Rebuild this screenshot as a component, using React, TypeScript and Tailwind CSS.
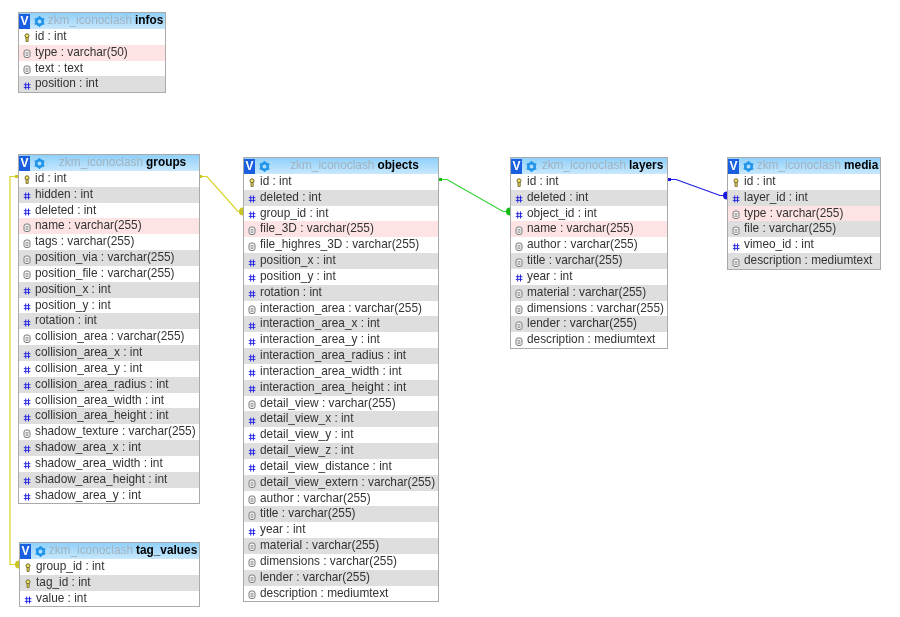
const KEY = "key";
const NUM = "num";
const DOC = "doc";

type Row = [string, string, string?];

const infos: Row[] = [
  [KEY, "id : int"],
  [DOC, "type : varchar(50)", "pink"],
  [DOC, "text : text"],
  [NUM, "position : int"],
];

const groups: Row[] = [
  [KEY, "id : int"],
  [NUM, "hidden : int"],
  [NUM, "deleted : int"],
  [DOC, "name : varchar(255)", "pink"],
  [DOC, "tags : varchar(255)"],
  [DOC, "position_via : varchar(255)"],
  [DOC, "position_file : varchar(255)"],
  [NUM, "position_x : int"],
  [NUM, "position_y : int"],
  [NUM, "rotation : int"],
  [DOC, "collision_area : varchar(255)"],
  [NUM, "collision_area_x : int"],
  [NUM, "collision_area_y : int"],
  [NUM, "collision_area_radius : int"],
  [NUM, "collision_area_width : int"],
  [NUM, "collision_area_height : int"],
  [DOC, "shadow_texture : varchar(255)"],
  [NUM, "shadow_area_x : int"],
  [NUM, "shadow_area_width : int"],
  [NUM, "shadow_area_height : int"],
  [NUM, "shadow_area_y : int"],
];

const tagValues: Row[] = [
  [KEY, "group_id : int"],
  [KEY, "tag_id : int"],
  [NUM, "value : int"],
];

const objects: Row[] = [
  [KEY, "id : int"],
  [NUM, "deleted : int"],
  [NUM, "group_id : int"],
  [DOC, "file_3D : varchar(255)", "pink"],
  [DOC, "file_highres_3D : varchar(255)"],
  [NUM, "position_x : int"],
  [NUM, "position_y : int"],
  [NUM, "rotation : int"],
  [DOC, "interaction_area : varchar(255)"],
  [NUM, "interaction_area_x : int"],
  [NUM, "interaction_area_y : int"],
  [NUM, "interaction_area_radius : int"],
  [NUM, "interaction_area_width : int"],
  [NUM, "interaction_area_height : int"],
  [DOC, "detail_view : varchar(255)"],
  [NUM, "detail_view_x : int"],
  [NUM, "detail_view_y : int"],
  [NUM, "detail_view_z : int"],
  [NUM, "detail_view_distance : int"],
  [DOC, "detail_view_extern : varchar(255)"],
  [DOC, "author : varchar(255)"],
  [DOC, "title : varchar(255)"],
  [NUM, "year : int"],
  [DOC, "material : varchar(255)"],
  [DOC, "dimensions : varchar(255)"],
  [DOC, "lender : varchar(255)"],
  [DOC, "description : mediumtext"],
];

const layers: Row[] = [
  [KEY, "id : int"],
  [NUM, "deleted : int"],
  [NUM, "object_id : int"],
  [DOC, "name : varchar(255)", "pink"],
  [DOC, "author : varchar(255)"],
  [DOC, "title : varchar(255)"],
  [NUM, "year : int"],
  [DOC, "material : varchar(255)"],
  [DOC, "dimensions : varchar(255)"],
  [DOC, "lender : varchar(255)"],
  [DOC, "description : mediumtext"],
];

const media: Row[] = [
  [KEY, "id : int"],
  [NUM, "layer_id : int"],
  [DOC, "type : varchar(255)", "pink"],
  [DOC, "file : varchar(255)"],
  [NUM, "vimeo_id : int"],
  [DOC, "description : mediumtext"],
];

function KeyIcon() {
  return (
    <svg width="8" height="11" viewBox="0 0 8 11" className="shrink-0">
      <circle cx="4" cy="4.8" r="2" fill="#f3e25a" stroke="#6e6838" strokeWidth="1" />
      <path d="M3 6.6h2.2v3.8H3z" fill="#f0dc50" stroke="#6e6838" strokeWidth="0.9" />
    </svg>
  );
}

function NumIcon() {
  return (
    <svg width="8" height="11" viewBox="0 0 8 11" className="shrink-0">
      <path d="M2.7 3.5v7M5.5 3.5v7M.8 5.7h6.6M.8 8.4h6.6" stroke="#2a2ae0" strokeWidth="1" fill="none" />
    </svg>
  );
}

function DocIcon() {
  return (
    <svg width="8" height="11" viewBox="0 0 8 11" className="shrink-0">
      <rect x="1" y="3" width="6" height="7.5" rx="2" fill="#f4f4f4" stroke="#7d7d7d" strokeWidth="1" />
      <path d="M2.6 5.6h2.8M2.6 7h2.8M2.6 8.4h2.8" stroke="#858585" strokeWidth="0.8" fill="none" />
    </svg>
  );
}

function GearIcon() {
  return (
    <svg width="13" height="13" viewBox="0 0 13 13" className="shrink-0">
      <circle cx="6.5" cy="6.5" r="3.3" fill="none" stroke="#1f94e8" strokeWidth="2.6" />
      <path
        d="M6.5 1v1.4M6.5 10.6V12M1.7 3.7l1.2.7M10.1 8.6l1.2.7M1.7 9.3l1.2-.7M10.1 4.4l1.2-.7"
        stroke="#1f94e8"
        strokeWidth="1.6"
        fill="none"
      />
    </svg>
  );
}

function TableCard({ name, rows, className }: { name: string; rows: Row[]; className: string }) {
  return (
    <div className={`absolute border border-[#aaaaaa] bg-white ${className}`}>
      <div className="flex h-[16px] items-center bg-gradient-to-b from-[#8fd0fa] to-[#c8e8fd] text-[11.85px] leading-none">
        <span className="flex h-[15px] w-[11px] shrink-0 items-center justify-center bg-[#1a5fe0] text-[12px] font-bold text-white">
          V
        </span>
        <span className="ml-[3px]">
          <GearIcon />
        </span>
        <span className="flex min-w-0 flex-1 justify-center whitespace-nowrap">
          <span className="text-[#a2b3bf]">zkm_iconoclash</span>
          <span className="ml-[3px] font-bold text-black">{name}</span>
        </span>
      </div>
      {rows.map(([icon, label, tone], i) => (
        <div
          key={label}
          className={`flex h-[15.84px] items-center gap-[4px] pl-[4px] text-[11.85px] leading-none whitespace-nowrap text-[#333333] ${
            tone === "pink" ? "bg-[#fde3e3]" : i % 2 === 1 ? "bg-[#dedede]" : "bg-white"
          }`}
        >
          {icon === KEY && <KeyIcon />}
          {icon === NUM && <NumIcon />}
          {icon === DOC && <DocIcon />}
          <span>{label}</span>
        </div>
      ))}
    </div>
  );
}

function Connectors() {
  return (
    <svg width="900" height="617" className="absolute top-0 left-0" fill="none" strokeWidth="1.2">
      <g stroke="#d6d226" fill="none">
        <path d="M199 176.5h8L238 211.5h5" />
        <path d="M18 176.5h-8V564.5h9" />
      </g>
      <rect x="199" y="175" width="3" height="3" fill="#c9c520" />
      <rect x="15" y="175" width="3" height="3" fill="#c9c520" />
      <circle cx="243" cy="211.5" r="4" fill="#c9c520" />
      <circle cx="19" cy="564.5" r="4" fill="#c9c520" />
      <path d="M439 179.5h8L503 211.5h7" stroke="#2fd42f" />
      <rect x="439" y="178" width="3" height="3" fill="#11bb11" />
      <circle cx="510" cy="211.5" r="4" fill="#11bb11" />
      <path d="M668 179.5h8L720 195.5h7" stroke="#1a1ae0" />
      <rect x="668" y="178" width="3" height="3" fill="#1a1ae0" />
      <circle cx="727" cy="195.5" r="4" fill="#1a1ae0" />
    </svg>
  );
}

export default function App() {
  return (
    <div className="relative h-[617px] w-[900px] overflow-hidden bg-white font-['Liberation_Sans',Arial,sans-serif] blur-[0.3px]">
      <Connectors />
      <TableCard name="infos" rows={infos} className="top-[12px] left-[18px] w-[148px]" />
      <TableCard name="groups" rows={groups} className="top-[154px] left-[18px] w-[182px]" />
      <TableCard name="tag_values" rows={tagValues} className="top-[542px] left-[19px] w-[181px]" />
      <TableCard name="objects" rows={objects} className="top-[157px] left-[243px] w-[196px]" />
      <TableCard name="layers" rows={layers} className="top-[157px] left-[510px] w-[158px]" />
      <TableCard name="media" rows={media} className="top-[157px] left-[727px] w-[154px]" />
    </div>
  );
}
